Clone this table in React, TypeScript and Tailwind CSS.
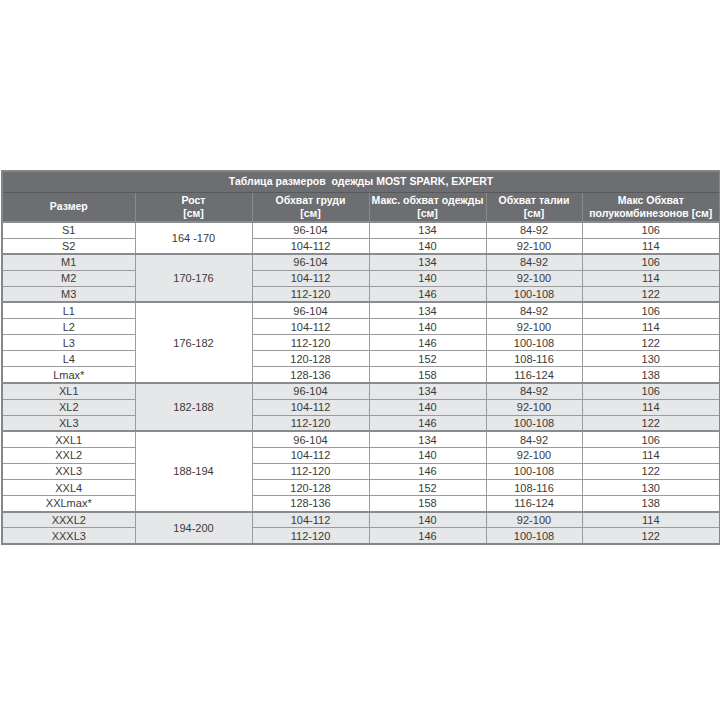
import React from "react";

type Row = [string, string, string, string, string];
type Group = { h: string; shade: boolean; rows: Row[] };

const groups: Group[] = [
  { h: "164 -170", shade: false, rows: [
    ["S1", "96-104", "134", "84-92", "106"],
    ["S2", "104-112", "140", "92-100", "114"],
  ]},
  { h: "170-176", shade: true, rows: [
    ["M1", "96-104", "134", "84-92", "106"],
    ["M2", "104-112", "140", "92-100", "114"],
    ["M3", "112-120", "146", "100-108", "122"],
  ]},
  { h: "176-182", shade: false, rows: [
    ["L1", "96-104", "134", "84-92", "106"],
    ["L2", "104-112", "140", "92-100", "114"],
    ["L3", "112-120", "146", "100-108", "122"],
    ["L4", "120-128", "152", "108-116", "130"],
    ["Lmax*", "128-136", "158", "116-124", "138"],
  ]},
  { h: "182-188", shade: true, rows: [
    ["XL1", "96-104", "134", "84-92", "106"],
    ["XL2", "104-112", "140", "92-100", "114"],
    ["XL3", "112-120", "146", "100-108", "122"],
  ]},
  { h: "188-194", shade: false, rows: [
    ["XXL1", "96-104", "134", "84-92", "106"],
    ["XXL2", "104-112", "140", "92-100", "114"],
    ["XXL3", "112-120", "146", "100-108", "122"],
    ["XXL4", "120-128", "152", "108-116", "130"],
    ["XXLmax*", "128-136", "158", "116-124", "138"],
  ]},
  { h: "194-200", shade: true, rows: [
    ["XXXL2", "104-112", "140", "92-100", "114"],
    ["XXXL3", "112-120", "146", "100-108", "122"],
  ]},
];

const th = "border border-[#8a8b8d] bg-[#6d6e71] text-white font-bold text-center align-middle leading-[13px] p-0 whitespace-nowrap text-[10.5px]";
const td = "border border-[#9a9b9d] text-center align-middle p-0 leading-[14px]";

export default function App() {
  return (
    <div className="w-[720px] h-[720px] bg-white pt-[170px] px-[1px]" style={{ fontFamily: '"Liberation Sans", Arial, sans-serif' }}>
      <table className="w-[718px] table-fixed border-collapse border-2 border-[#858688] text-[11px] text-[#3a3a3a]">
        <colgroup>
          <col className="w-[133px]" />
          <col className="w-[117px]" />
          <col className="w-[117px]" />
          <col className="w-[117px]" />
          <col className="w-[96px]" />
          <col className="w-[138px]" />
        </colgroup>
        <thead>
          <tr className="h-[21px]">
            <th colSpan={6} className={th + " border-b-[#58595b]"}>Таблица размеров&nbsp; одежды MOST SPARK, EXPERT</th>
          </tr>
          <tr className="h-[30px]">
            <th className={th}>Размер</th>
            <th className={th}>Рост<br />[см]</th>
            <th className={th}>Обхват груди<br />[см]</th>
            <th className={th}>Макс. обхват одежды<br />[см]</th>
            <th className={th}>Обхват талии<br />[см]</th>
            <th className={th}>Макс Обхват<br />полукомбинезонов [см]</th>
          </tr>
        </thead>
        <tbody>
          {groups.map((g, gi) =>
            g.rows.map((r, ri) => {
              const bg = g.shade ? "bg-[#e6e7e8]" : "bg-white";
              const top = ri === 0 ? " border-t-2 border-t-[#8a8b8d]" : "";
              return (
                <tr key={gi + "-" + ri} className={"h-[16.1px] " + bg}>
                  <td className={td + top}>{r[0]}</td>
                  {ri === 0 && (
                    <td rowSpan={g.rows.length} className={td + top}>{g.h}</td>
                  )}
                  <td className={td + top}>{r[1]}</td>
                  <td className={td + top}>{r[2]}</td>
                  <td className={td + top}>{r[3]}</td>
                  <td className={td + top}>{r[4]}</td>
                </tr>
              );
            })
          )}
        </tbody>
      </table>
    </div>
  );
}
